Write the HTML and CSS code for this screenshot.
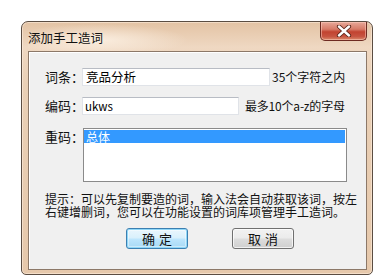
FILE: index.html
```html
<!DOCTYPE html>
<html lang="zh-CN">
<head>
<meta charset="utf-8">
<title>添加手工造词</title>
<link rel="stylesheet" href="styles.css">
</head>
<body>
<div class="stage">
  <div class="window">
    <div class="titlebar">
      <span class="title">添加手工造词</span>
      <div class="close">
        <svg width="16" height="12" viewBox="0 0 16 12">
          <path d="M3 1.5 L13 10.5 M13 1.5 L3 10.5" stroke="#5a2418" stroke-width="4.2" stroke-linecap="round"/>
          <path d="M3 1.5 L13 10.5 M13 1.5 L3 10.5" stroke="#ffffff" stroke-width="2.4" stroke-linecap="round"/>
        </svg>
      </div>
    </div>
    <div class="client">
      <div class="row">
        <span class="label">词条：</span>
        <div class="input input-word">竞品分析</div>
        <span class="note note-word">35个字符之内</span>
      </div>
      <div class="row row-code">
        <span class="label">编码：</span>
        <div class="input input-code">ukws</div>
        <span class="note note-code">最多10个a-z的字母</span>
      </div>
      <div class="row row-list">
        <span class="label">重码：</span>
        <div class="listbox">
          <div class="item selected">总体</div>
        </div>
      </div>
      <p class="hint">提示：可以先复制要造的词，输入法会自动获取该词，按左
右键增删词，您可以在功能设置的词库项管理手工造词。</p>
      <div class="buttons">
        <div class="btn btn-default">确定</div>
        <div class="btn">取消</div>
      </div>
    </div>
  </div>
</div>
</body>
</html>
```

FILE: styles.css
```css
html, body {
  margin: 0;
  padding: 0;
  background: #ffffff;
}

body {
  font-family: "Noto Sans CJK SC", "Noto Sans", sans-serif;
  color: #000;
}

.stage {
  padding: 21px 0 0 21px;
}

.window {
  width: 352px;
  height: 254px;
  box-sizing: border-box;
  border: 1px solid #5b4d42;
  border-radius: 7px 7px 5px 5px;
  background: linear-gradient(180deg, #e3c3a4 0%, #efd8c2 10%, #ead0b6 25%, #e6c8ab 100%);
  display: flex;
  flex-direction: column;
  padding: 0 5px 4px 6px;
  box-shadow: inset 0 0 0 1px rgba(255, 240, 225, 0.55);
}

.titlebar {
  height: 29px;
  display: flex;
  justify-content: space-between;
  align-items: flex-start;
  background: radial-gradient(ellipse 90px 16px at 70px 18px, rgba(255, 246, 235, 0.75), rgba(255, 246, 235, 0));
}

.title {
  font-size: 12.5px;
  line-height: 14px;
  margin-top: 9px;
  color: #111;
}

.close {
  width: 47px;
  height: 19px;
  box-sizing: border-box;
  border: 1px solid #6e2b22;
  border-top: none;
  border-radius: 0 0 5px 5px;
  background: linear-gradient(180deg, #e7a898 0%, #d77b68 40%, #c24330 55%, #c75440 80%, #da8a6c 100%);
  box-shadow: inset 0 0 0 1px rgba(255, 210, 195, 0.5);
  display: flex;
  justify-content: center;
  align-items: center;
}

.client {
  flex: 1;
  background: #f0f0f0;
  border: 1px solid #8c7868;
  box-shadow: inset 1px 1px 0 #ffffff;
  padding: 16px 0 0 16px;
  display: flex;
  flex-direction: column;
}

.row {
  display: flex;
  align-items: center;
  height: 18px;
}

.row-code {
  margin-top: 11px;
}

.row-list {
  margin-top: 13px;
  height: auto;
  align-items: flex-start;
}

.label {
  width: 37px;
  font-size: 13px;
  line-height: 18px;
  color: #111;
  white-space: nowrap;
}

.input {
  height: 18px;
  box-sizing: border-box;
  background: #ffffff;
  border: 1px solid #e0e3e8;
  border-top-color: #b8bcc4;
  font-size: 12.5px;
  line-height: 16px;
  padding-left: 3px;
  color: #000;
}

.input-word {
  width: 188px;
}

.input-code {
  width: 157px;
  padding-left: 2px;
  font-size: 11.5px;
}

.note {
  font-size: 12px;
  line-height: 18px;
  white-space: nowrap;
  color: #111;
}

.note-word {
  margin-left: 2px;
}

.note-code {
  margin-left: 6px;
  letter-spacing: -0.2px;
}

.listbox {
  margin-left: 1px;
  width: 264px;
  height: 54px;
  box-sizing: border-box;
  background: #ffffff;
  border: 1px solid #8a8a8a;
  padding: 1px 1px 0 0;
}

.item {
  height: 13px;
  font-size: 12px;
  line-height: 13px;
  padding-left: 2px;
}

.item.selected {
  background: #3399ff;
  color: #ffffff;
}

.hint {
  margin: 10px 0 0 0;
  white-space: pre;
  font-size: 12px;
  line-height: 13px;
  color: #111;
}

.buttons {
  margin-top: 10px;
  padding-left: 81px;
  display: flex;
  gap: 44px;
}

.btn {
  width: 62px;
  height: 21px;
  box-sizing: border-box;
  border: 1px solid #707070;
  border-radius: 3px;
  background: linear-gradient(180deg, #f2f2f2 0%, #ebebeb 48%, #dddddd 52%, #cfcfcf 100%);
  box-shadow: inset 0 0 0 1px rgba(255, 255, 255, 0.7);
  font-size: 13px;
  line-height: 19px;
  text-align: center;
  letter-spacing: 4px;
  text-indent: 4px;
  color: #111;
}

.btn-default {
  border-color: #3c7fb1;
  background: linear-gradient(180deg, #eaf6fd 0%, #d9f0fc 48%, #bee6fd 52%, #a7d9f5 100%);
  box-shadow: inset 0 0 0 1px #8fd7f8, inset 0 0 0 2px rgba(255, 255, 255, 0.4);
}
```
